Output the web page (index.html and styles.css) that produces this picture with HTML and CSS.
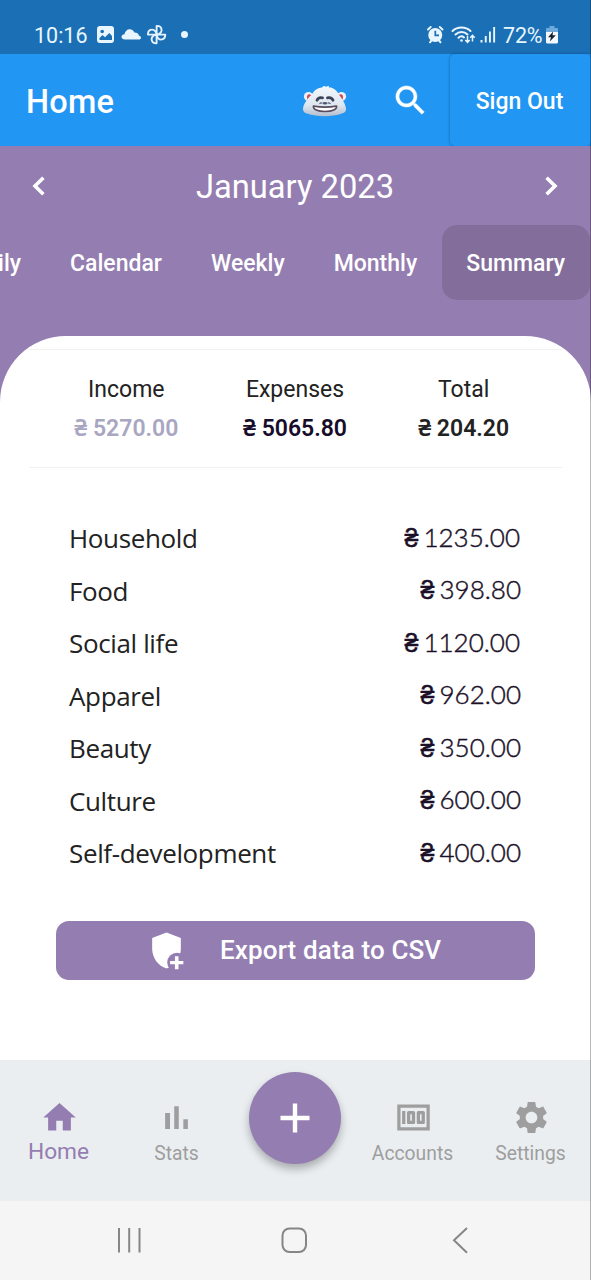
FILE: index.html
```html
<!DOCTYPE html>
<html lang="en">
<head>
<meta charset="utf-8">
<title>Home</title>
<link rel="stylesheet" href="styles.css">
</head>
<body>
<div class="phone">
  <div class="status">
    <span class="clock">10:16</span>
    <svg class="status-left" width="96" height="24" viewBox="0 0 96 24">
      <rect x="1" y="3" width="17" height="17" rx="3" fill="#eaf6ff"/>
      <circle cx="6.200" cy="8.500" r="1.800" fill="#1a6fb5"/>
      <path d="M3.500 17v-2l3-3 2.500 2.300 4.300-4.300 2.700 3v4z" fill="#1a6fb5"/>
      <path d="M29 16.500c-2 0-3.500-.9-3.500-2.500 0-1.700 1.300-2.700 3-2.800.5-3 2.500-5 5.200-5 2.300 0 3.900 1.300 4.700 3.200 3 0 4.300 1.400 4.600 3.300 1.500.3 2 1.200 2 2 0 1.100-.8 1.800-2.300 1.800z" fill="#eaf6ff"/>
      <g transform="translate(60.600 11.600)" fill="none" stroke="#e4f2ff" stroke-width="1.900" stroke-linejoin="round">
        <path d="M0 0v-8.700c3.500 0 5 2.200 5 4.300S2.500 0 0 0z"/>
        <path d="M0 0v-8.700c3.500 0 5 2.200 5 4.300S2.500 0 0 0z" transform="rotate(90)"/>
        <path d="M0 0v-8.700c3.500 0 5 2.200 5 4.300S2.500 0 0 0z" transform="rotate(180)"/>
        <path d="M0 0v-8.700c3.500 0 5 2.200 5 4.300S2.500 0 0 0z" transform="rotate(270)"/>
      </g>
      <circle cx="88.500" cy="11.600" r="3.500" fill="#eaf6ff"/>
    </svg>
    <svg class="status-right" width="72" height="24" viewBox="0 0 72 24">
      <g stroke="#eaf6ff" stroke-width="2" stroke-linecap="round">
        <path d="M2 6.500 4.700 4M16.500 6.500 13.800 4M4 19.300l1.500-2M14.500 19.300l-1.500-2" />
      </g>
      <circle cx="9.250" cy="12" r="7" fill="#eaf6ff"/>
      <path d="M9.300 7.700v4.700h3.700" fill="none" stroke="#1a6fb5" stroke-width="1.700"/>
      <g fill="none" stroke="#eaf6ff" stroke-width="2" stroke-linecap="round">
        <path d="M26.500 8c5-4.600 13-4.600 18 0"/>
        <path d="M29.500 11.500c3.500-3.300 8.700-3.300 12 0"/>
        <path d="M32.500 14.700c1.600-1.500 4-1.600 5.500-.3"/>
      </g>
      <circle cx="35.500" cy="17.500" r="1.300" fill="#eaf6ff"/>
      <path d="M41.500 13v6M39.300 17l2.200 2.400 2.200-2.400M46.500 18.500v-6M44.300 14.800l2.200-2.500 2.200 2.500" fill="none" stroke="#eaf6ff" stroke-width="1.500"/>
      <g fill="#eaf6ff">
        <rect x="54.500" y="17" width="2" height="2.500"/>
        <rect x="58.800" y="13" width="1.900" height="6.500"/>
        <rect x="63" y="8.500" width="1.900" height="11"/>
        <rect x="67.200" y="4" width="1.900" height="15.500"/>
      </g>
    </svg>
    <span class="battery-text">72%</span>
    <svg class="battery" width="12" height="18" viewBox="0 0 12 18">
      <path d="M3.500 0h5v2H11q1 0 1 1v3H0V3q0-1 1-1h2.500z" fill="#6ea9dc"/>
      <path d="M0 6h12v10q0 1.500-1.500 1.500h-9Q0 17.500 0 16z" fill="#f3f9ff"/>
      <path d="M7.200 5.500 2 11.300h3l-1.200 4.200L9.800 9.300H6.500z" fill="#17222e"/>
    </svg>
  </div>

  <header class="appbar">
    <h1 class="title">Home</h1>
    <svg class="yeti" width="46" height="36" viewBox="0 0 46 36">
      <defs>
        <linearGradient id="fur" x1="0" y1="0" x2="0" y2="1">
          <stop offset="0" stop-color="#f4f9fd"/><stop offset=".65" stop-color="#dde6ef"/><stop offset="1" stop-color="#b3bdce"/>
        </linearGradient>
      </defs>
      <circle cx="6.500" cy="12.500" r="4.600" fill="#eaf1f8"/><circle cx="39.500" cy="12.500" r="4.600" fill="#eaf1f8"/>
      <ellipse cx="7.300" cy="13.200" rx="2.300" ry="2.900" fill="#d9434f"/><ellipse cx="38.700" cy="13.200" rx="2.300" ry="2.900" fill="#d9434f"/>
      <path d="M10.500 9.500c2-3.500 5.500-5.800 9.500-6 .8-1.200 2-1.700 3.500-1.500l-.5 1 4-1.300-.4 1.600c4.400.2 8 2.700 9.900 6.700 3.500 4.500 7 10 7.500 14.500.3 3-2 4.500-4 5-10 3.500-25 3.500-35 0-2-.5-4.300-2-4-5 .5-4.500 4.500-10 9.500-15z" fill="url(#fur)"/>
      <path d="M15 16.200c.8-2 3-3 5.500-2.400M25.500 13.800c2.500-.6 4.700.4 5.500 2.400" fill="none" stroke="#3c4258" stroke-width="2.800" stroke-linecap="round"/>
      <ellipse cx="23" cy="19.300" rx="2.200" ry="1.200" fill="#4d546c"/>
      <path d="M17.500 19.800q1.500-1.600 3-.5M25.500 19.300q1.500-1.100 3 .5" fill="none" stroke="#5a6075" stroke-width="1.100"/>
      <path d="M11.500 22c7 1.400 16 1.400 23 0 .7 3.500-4 5.500-11.500 5.500S10.800 25.500 11.500 22z" fill="#fff" stroke="#584a5c" stroke-width="1.700" stroke-linejoin="round"/>
    </svg>
    <svg class="search" width="39" height="39" viewBox="0 0 24 24" fill="#fff"><path d="M15.500 14h-.79l-.28-.27C15.410 12.590 16 11.110 16 9.500 16 5.910 13.090 3 9.500 3S3 5.910 3 9.500 5.910 16 9.500 16c1.610 0 3.090-.59 4.230-1.570l.27.28v.79l5 4.990L20.490 19l-4.990-5zm-6 0C7.010 14 5 11.990 5 9.500S7.010 5 9.500 5 14 7.010 14 9.500 11.990 14 9.500 14z" stroke="#fff" stroke-width=".25"/></svg>
    <button class="signout">Sign Out</button>
  </header>

  <main class="content">
    <div class="month">
      <svg width="20" height="24" viewBox="0 0 20 24"><path d="M14.400 3.800 6 12l8.400 8.200"/></svg>
      <span class="month-name">January 2023</span>
      <svg width="20" height="24" viewBox="0 0 20 24"><path d="M5.600 3.800 14 12l-8.400 8.200"/></svg>
    </div>
    <nav class="tabs">
      <span class="tab">Daily</span>
      <span class="tab">Calendar</span>
      <span class="tab">Weekly</span>
      <span class="tab">Monthly</span>
      <span class="tab active">Summary</span>
    </nav>
    <section class="card">
      <div class="totals">
        <div class="total"><span>Income</span><b class="income">₴ 5270.00</b></div>
        <div class="total"><span>Expenses</span><b class="expenses">₴ 5065.80</b></div>
        <div class="total"><span>Total</span><b>₴ 204.20</b></div>
      </div>
      <ul class="list">
        <li><span>Household</span><span class="amount wide"><i>₴</i>1235.00</span></li>
        <li><span>Food</span><span class="amount"><i>₴</i>398.80</span></li>
        <li><span>Social life</span><span class="amount wide"><i>₴</i>1120.00</span></li>
        <li><span>Apparel</span><span class="amount"><i>₴</i>962.00</span></li>
        <li><span>Beauty</span><span class="amount"><i>₴</i>350.00</span></li>
        <li><span>Culture</span><span class="amount"><i>₴</i>600.00</span></li>
        <li><span>Self-development</span><span class="amount"><i>₴</i>400.00</span></li>
      </ul>
      <button class="export">
        <svg width="43" height="43" viewBox="0 0 24 24">
          <path d="M12 2 4 5v6.090c0 5.050 3.410 9.760 8 10.910 4.590-1.150 8-5.860 8-10.910V5z" fill="#fff"/>
          <circle cx="17.900" cy="18.700" r="5.500" fill="#947db0"/>
          <path d="M16.700 15.200h2v2.700h2.700v1.800h-2.700v2.700h-2v-2.700H14v-1.800h2.700z" fill="#fff"/>
        </svg>
        <span>Export data to CSV</span>
      </button>
    </section>
  </main>

  <nav class="bottom">
    <a class="item current">
      <svg width="39" height="39" viewBox="0 0 24 24"><path d="M10 20v-6h4v6h5v-8h3L12 3 2 12h3v8z"/></svg>
      <span>Home</span>
    </a>
    <a class="item">
      <svg width="39" height="39" viewBox="0 0 24 24"><path d="M5 9.200h3V19H5zM10.600 5h2.800v14h-2.800zm5.600 8H19v6h-2.800z"/></svg>
      <span>Stats</span>
    </a>
    <a class="fab"><svg width="30" height="30" viewBox="0 0 30 30"><path d="M15 .5v29M.5 15h29" stroke="#fff" stroke-width="4.400"/></svg></a>
    <a class="item">
      <svg class="nudge" width="39" height="39" viewBox="0 0 24 24"><path d="M5 8h2v8H5zm7 0H9c-.55 0-1 .45-1 1v6c0 .55.45 1 1 1h3c.55 0 1-.45 1-1V9c0-.55-.45-1-1-1zm-1 6h-1v-4h1v4zm7-6h-3c-.55 0-1 .45-1 1v6c0 .55.45 1 1 1h3c.55 0 1-.45 1-1V9c0-.55-.45-1-1-1zm-1 6h-1v-4h1v4zM2 4v16h20V4H2zm2 14V6h16v12H4z"/></svg>
      <span>Accounts</span>
    </a>
    <a class="item">
      <svg class="nudge" width="39" height="39" viewBox="0 0 24 24"><path d="M19.140 12.940c.04-.3.060-.61.060-.94 0-.32-.02-.64-.07-.94l2.030-1.580c.18-.14.230-.41.120-.61l-1.920-3.320c-.12-.22-.37-.29-.59-.22l-2.390.96c-.5-.38-1.030-.7-1.620-.94l-.36-2.540c-.04-.24-.24-.41-.48-.41h-3.840c-.24 0-.43.170-.47.410l-.36 2.540c-.59.240-1.130.570-1.620.940l-2.390-.96c-.22-.08-.47 0-.59.220L2.740 8.870c-.12.210-.08.470.12.610l2.030 1.580c-.05.3-.09.630-.09.940s.02.640.07.940l-2.030 1.580c-.18.140-.23.410-.12.610l1.920 3.320c.12.220.37.290.59.220l2.390-.96c.5.380 1.030.7 1.620.940l.36 2.540c.05.240.24.410.48.410h3.840c.24 0 .44-.17.470-.41l.36-2.540c.59-.24 1.130-.56 1.620-.94l2.390.96c.22.080.47 0 .59-.22l1.920-3.320c.12-.22.070-.47-.12-.61l-2.010-1.580zM12 15.600c-1.980 0-3.600-1.620-3.600-3.600s1.620-3.600 3.600-3.600 3.600 1.620 3.600 3.600-1.620 3.600-3.600 3.600z"/></svg>
      <span>Settings</span>
    </a>
  </nav>

  <div class="sysnav">
    <svg width="30" height="30" viewBox="0 0 30 30"><path d="M5 3v24.500M15.200 3v24.500M25.500 3v24.500"/></svg>
    <svg width="30" height="30" viewBox="0 0 30 30"><rect x="3.500" y="3.500" width="23.500" height="23.500" rx="7"/></svg>
    <svg width="30" height="30" viewBox="0 0 30 30"><path d="M22 3 9 15.300l13 12.500"/></svg>
  </div>
</div>
<div class="edge"></div>
</body>
</html>
```

FILE: styles.css
```css
* { box-sizing: border-box; }
body { margin: 0; width: 591px; height: 1280px; overflow: hidden; position: relative; background: #fff; font-family: Roboto, "Noto Sans", sans-serif; }
.phone { width: 591px; height: 1280px; display: flex; flex-direction: column; }
button { border: 0; font-family: inherit; color: #fff; padding: 0; }
svg { display: block; flex: none; }

.status { height: 54px; background: #1a6fb5; display: flex; align-items: center; padding: 16px 33px 0 34px; color: #e8f6ff; font-size: 21.500px; }
.clock { width: 61px; }
.status-left { margin-left: 1px; }
.status-right { margin-left: auto; }
.battery-text { margin-left: 5px; width: 43px; letter-spacing: -.2px; }

.appbar { height: 92px; background: #2196f3; display: flex; align-items: center; }
.title { margin: 3px 0 0; padding-left: 26px; width: 302px; color: #fff; font-size: 32.500px; font-weight: 500; letter-spacing: .2px; }
.yeti { margin-top: 3px; }
.search { margin-left: 43px; }
.signout { margin-left: auto; width: 141px; height: 92px; border-radius: 5px; padding: 2px 2px 0 0; background: #2196f3; font-size: 23px; font-weight: 500; box-shadow: 0 0 3px rgba(0, 30, 80, .45); }

.content { height: 914px; background: #947db0; padding-top: 19px; }
.month { height: 42px; display: flex; align-items: center; justify-content: space-between; padding: 0 30px 0 29px; color: #fff; font-size: 32.700px; }
.month-name { margin-top: 1px; }
.month svg { fill: none; stroke: #fff; stroke-width: 3.600; margin-top: -1px; }
.tabs { margin-top: 18px; height: 75px; display: flex; justify-content: flex-end; overflow: hidden; padding-right: 1px; }
.tab { flex: none; padding: 0 25px 0 24px; border-radius: 15px; line-height: 77px; font-size: 23px; font-weight: 500; color: #fff; }
.tab.active { background: #836e9b; }

.card { margin-top: 36px; height: 724px; background: #fff; border-radius: 66px 66px 0 0; padding: 13px 29px 0; }
.totals { height: 119px; border-top: 1px solid #f1f1f1; border-bottom: 1px solid #f1f1f1; padding: 23px 14px 0 13px; display: grid; grid-template-columns: repeat(3, 1fr); text-align: center; }
.total { display: flex; flex-direction: column; gap: 5px; font-size: 23px; line-height: 34px; color: #222; }
.total b { font-weight: 600; }
.total .income { color: #a9a6c2; }
.total .expenses { color: #170d2b; }

.list { list-style: none; margin: 44px 0 0; padding: 0 41px 0 40px; }
.list li { height: 52.500px; display: flex; align-items: center; justify-content: space-between; font-family: "Open Sans", sans-serif; font-size: 26px; letter-spacing: -.36px; color: #222; }
.amount { font-family: Lato, sans-serif; font-weight: 300; font-size: 26px; letter-spacing: 0; color: #1a1128; margin-top: -3px; -webkit-text-stroke: .45px #1a1128; }
.amount i { font: normal 400 25px Roboto, sans-serif; margin-right: 5px; }
.wide { margin-right: 1px; }

.export { margin: 41px 27px 0; width: 479px; height: 59px; background: #947db0; border-radius: 13px; display: flex; align-items: center; padding-left: 89px; font-size: 26px; letter-spacing: .13px; font-weight: 500; }
.export span { margin: 0 0 0 32px; }

.bottom { height: 141px; background: #eaeef1; display: grid; grid-template-columns: repeat(5, 118px); justify-items: center; }
.item { display: flex; flex-direction: column; align-items: center; padding-top: 38px; color: #9e9e9e; font-size: 19.300px; line-height: 28px; }
.item svg { fill: currentColor; }
.item .nudge { margin-left: 1px; }
.item span { margin: 3px 1px 0 0; }
.current { color: #947db0; font-size: 22.700px; }
.current span { margin-top: 1px; }
.fab { margin-top: 11.500px; width: 92px; height: 92px; border-radius: 50%; background: #947db0; display: flex; align-items: center; justify-content: center; box-shadow: 0 5px 9px rgba(0, 0, 0, .28); }

.sysnav { height: 79px; background: #f5f5f5; display: flex; justify-content: space-between; padding: 24px 116px 0 113.500px; }
.sysnav svg { fill: none; stroke: #868686; stroke-width: 2; }

.edge { position: absolute; top: 0; right: 0; width: 1px; height: 1280px; background: rgba(0, 0, 0, .28); }
```
